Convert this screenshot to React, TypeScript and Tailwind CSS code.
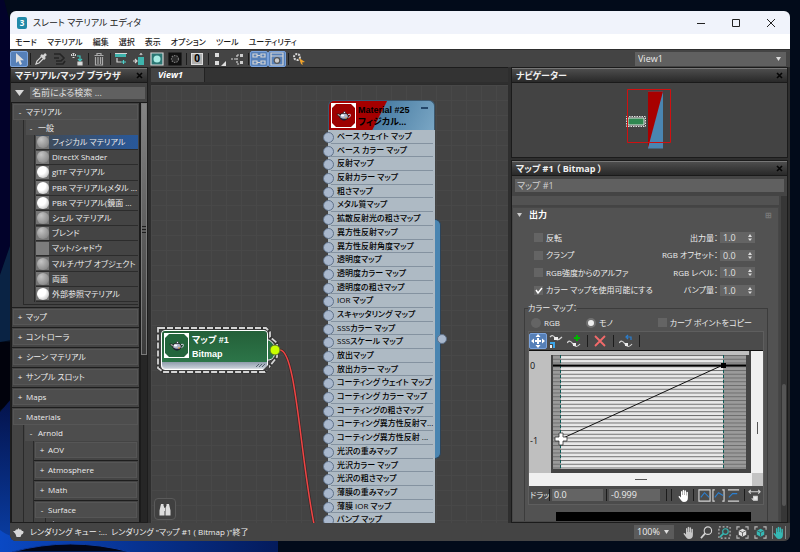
import type { ReactNode } from "react";
import clsx from "clsx";

const materials = [
  { name: "フィジカル マテリアル", tone: "gray" },
  { name: "DirectX Shader", tone: "gray" },
  { name: "glTF マテリアル", tone: "white" },
  { name: "PBR マテリアル(メタル ...", tone: "white" },
  { name: "PBR マテリアル(鏡面 ...", tone: "white" },
  { name: "シェル マテリアル", tone: "gray" },
  { name: "ブレンド", tone: "gray" },
  { name: "マット/シャドウ", tone: "flat" },
  { name: "マルチ/サブ オブジェクト", tone: "gray" },
  { name: "両面", tone: "gray" },
  { name: "外部参照マテリアル", tone: "white" },
];

const slots = [
  "ベース ウェイト マップ",
  "ベース カラー マップ",
  "反射マップ",
  "反射カラー マップ",
  "粗さマップ",
  "メタル質マップ",
  "拡散反射光の粗さマップ",
  "異方性反射マップ",
  "異方性反射角度マップ",
  "透明度マップ",
  "透明度カラー マップ",
  "透明度の粗さマップ",
  "IOR マップ",
  "スキャッタリング マップ",
  "SSSカラー マップ",
  "SSSスケール マップ",
  "放出マップ",
  "放出カラー マップ",
  "コーティング ウェイト マップ",
  "コーティング カラー マップ",
  "コーティングの粗さマップ",
  "コーティング異方性反射マ...",
  "コーティング異方性反射 ...",
  "光沢の重みマップ",
  "光沢カラー マップ",
  "光沢の粗さマップ",
  "薄膜の重みマップ",
  "薄膜 IOR マップ",
  "バンプ マップ",
];

const menus = ["モード", "マテリアル", "編集", "選択", "表示", "オプション", "ツール", "ユーティリティ"];

const outputRows = [
  { id: "invert", check: "反転", on: false, value: "出力量：", amount: "1.0" },
  { id: "clamp", check: "クランプ", on: false, value: "RGB オフセット：", amount: "0.0" },
  { id: "alpha", check: "RGB強度からのアルファ", on: false, value: "RGB レベル：", amount: "1.0" },
  { id: "curve", check: "カラー マップを使用可能にする", on: true, value: "バンプ量：", amount: "1.0" },
];

function Svg({ children, size = 14 }: { children: ReactNode; size?: number }) {
  return (
    <svg width={size} height={size} viewBox="0 0 14 14" fill="none" stroke="#d4d4d4" strokeWidth="1.2" aria-hidden>
      {children}
    </svg>
  );
}

function Tool({ label, active = false, children }: { label: string; active?: boolean; children: ReactNode }) {
  return (
    <button
      aria-label={label}
      className={clsx("flex h-4 w-[18px] shrink-0 items-center justify-center", active && "rounded-xs border border-[#7ba3dc] bg-[#5680b8]")}
    >
      {children}
    </button>
  );
}

function Sep() {
  return <span className="flex h-3 w-1 shrink-0 justify-center"><span className="w-px bg-[#1c1c1c]" /></span>;
}

function Teapot({ size = 16 }: { size?: number }) {
  return (
    <svg width={size} height={size} viewBox="0 0 16 16" aria-hidden>
      <path d="M4.500 9.500L.8 6.300l1.400-.3L5.500 7z" fill="#fff" stroke="#111" strokeWidth=".7" />
      <path d="M12 6.500q3-1 2.500 1q-.5 2-3 2.500" fill="none" stroke="#ccd" strokeWidth="1" />
      <ellipse cx="8" cy="8.500" rx="4.200" ry="3.300" fill="#aeb4c8" stroke="#111" strokeWidth=".8" />
      <path d="M4.500 9.500q3.500 2.500 7 0q-1 3-3.500 3q-2.500 0-3.500-3" fill="#1d2038" />
      <ellipse cx="6.500" cy="7.500" rx="1.800" ry="1" fill="#fff" />
      <circle cx="8.500" cy="4.500" r="1" fill="#e8e8ff" stroke="#111" strokeWidth=".5" />
      <path d="M9 10h2" stroke="#e79b2e" />
    </svg>
  );
}

function Thumb({ className }: { className: string }) {
  return (
    <div className={clsx("relative flex h-[25px] w-[25px] shrink-0 items-center justify-center border border-white", className)}>
      <svg className="absolute inset-0" width="23" height="23" aria-hidden>
        <path d="M0 0h4L0 4zM23 0v4L19 0zM0 23v-4L4 23zM23 23h-4L23 19z" fill="#fff" />
      </svg>
      <Teapot />
    </div>
  );
}

function PanelHeader({ title }: { title: string }) {
  return (
    <div className="flex h-[15px] shrink-0 items-center justify-between border-t border-b border-t-[#777] border-b-[#1a1a1a] bg-linear-to-b from-[#4d4d4d] to-[#292929] pr-1 pl-1">
      <h2 className="text-[9px] leading-3 font-bold whitespace-nowrap text-[#f0f0f0]">{title}</h2>
      <button aria-label={`${title} を閉じる`} className="flex">
        <svg width="7" height="7" viewBox="0 0 7 7" stroke="#050505" strokeWidth="1.600" aria-hidden>
          <path d="M1 1l5 5M6 1L1 6" />
        </svg>
      </button>
    </div>
  );
}

function Group({ label, open = false, children }: { label: string; open?: boolean; children?: ReactNode }) {
  return (
    <div className="border-b border-[#1e1e1e] p-px pb-0.5">
      <button className="flex h-4 w-full items-center gap-[3px] border border-[#565656] bg-[#4d4d4d] px-[3px] text-left whitespace-nowrap">
        <span className="w-1.5 text-center">{open ? "-" : "+"}</span>
        {label}
      </button>
      {children}
    </div>
  );
}

function Swatch({ tone }: { tone: string }) {
  if (tone === "flat") return <span className="h-[13px] w-[13px] shrink-0 bg-[#7d7d7d]" />;
  return (
    <span className="flex h-[13px] w-[13px] shrink-0 items-center justify-center bg-[#757575]">
      <span
        className={clsx(
          "h-3 w-3 rounded-full bg-radial-[at_35%_30%]",
          tone === "white" ? "from-white from-40% to-[#a5a5a5]" : "from-[#c4c4c4] to-[#777]",
        )}
      />
    </span>
  );
}

function Browser() {
  return (
    <section className="flex min-h-0 flex-col border border-[#1d1d1d] bg-[#444]">
      <PanelHeader title="マテリアル/マップ ブラウザ" />
      <div className="flex h-[19px] shrink-0 items-center gap-1.5 pr-0.5 pl-1">
        <button aria-label="検索オプション" className="flex">
          <svg width="9" height="6" aria-hidden><path d="M0 0h9L4.500 6z" fill="#d8d8d8" /></svg>
        </button>
        <input aria-label="検索" defaultValue="名前による検索 ..." className="h-3 min-w-0 flex-1 bg-[#606060] px-0.5 text-[9px] leading-3 text-[#dedede]" />
      </div>
      <div className="flex min-h-0 flex-1 border-t border-[#1b1b1b]">
        <div className="min-w-0 flex-1 overflow-hidden border-l border-[#1b1b1b] text-[8px] leading-3">
          <Group label="マテリアル" open>
            <div className="ml-2.5 border-b border-l border-[#2a2a2a] pb-0.5 pl-0.5">
              <button className="flex h-[15px] w-full items-center gap-1 bg-[#4d4d4d] px-0.5 text-left">
                <span className="w-1.5 text-center">-</span>一般
              </button>
              <ul className="ml-2 grid h-[167px] grid-rows-11 border-l border-[#2a2a2a] pl-px">
                {materials.map((item, i) => (
                  <li
                    key={item.name}
                    className={clsx(
                      "flex min-w-0 items-center gap-[3px] border-b border-[#2c2c2c] whitespace-nowrap",
                      i === 0 ? "bg-linear-to-r from-[#404953] to-[#28589a]" : "bg-[#444]",
                    )}
                  >
                    <Swatch tone={item.tone} />
                    <span>{item.name}</span>
                  </li>
                ))}
              </ul>
            </div>
          </Group>
          {["マップ", "コントローラ", "シーン マテリアル", "サンプル スロット", "Maps"].map((name) => (
            <Group key={name} label={name} />
          ))}
          <Group label="Materials" open>
            <div className="ml-2.5 border-l border-[#2a2a2a] pl-px">
              <button className="flex h-4 w-full items-center gap-1 bg-[#4d4d4d] px-[3px] text-left">
                <span className="w-1.5 text-center">-</span>Arnold
              </button>
              <div className="ml-2 border-l border-[#2a2a2a]">
                <Group label="AOV" />
                <Group label="Atmosphere" />
                <Group label="Math" />
                <Group label="Surface" open>
                  <div className="ml-2.5 h-4 border-l border-[#2a2a2a]"><Teapot size={14} /></div>
                </Group>
              </div>
            </div>
          </Group>
        </div>
        <div className="flex w-2 shrink-0 flex-col border-l-2 border-[#1b1b1b] bg-[#262626]">
          <div className="flex h-[252px] flex-col items-center justify-center gap-0.5 border border-[#7a7a7a] bg-linear-to-b from-[#858585] to-[#3a3a3a]">
            <span className="h-px w-1 bg-[#1e1e1e]" />
            <span className="h-px w-1 bg-[#1e1e1e]" />
            <span className="h-px w-1 bg-[#1e1e1e]" />
          </div>
        </div>
      </div>
    </section>
  );
}

function MaterialNode() {
  return (
    <div className="absolute top-[15px] left-[177px] w-[107px] text-black">
      <div className="absolute top-[119px] left-full h-[240px] w-1.5 rounded-r-md border border-l-0 border-[#2c4358] bg-[#4a85b1]" />
      <div className="absolute top-[234px] left-[109px] h-2.5 w-2.5 rounded-full border border-[#5f7189] bg-[#a9b8cd]" />
      <div className="flex h-[30px] items-start gap-0.5 overflow-hidden rounded-t-md border border-b-0 border-[#3c5970] bg-[linear-gradient(117deg,#a50000_48%,#4b7fa5_49%,#7aa6c4)] p-0.5">
        <Thumb className="bg-[#9d0000]" />
        <div className="min-w-0 flex-1 pt-px font-['Liberation_Sans','Noto_Sans_CJK_JP',sans-serif] text-[9px] leading-3 font-bold whitespace-nowrap">
          <p>Material #25</p>
          <p>フィジカル...</p>
        </div>
        <button aria-label="折りたたむ" className="absolute top-[7px] right-[7px] h-0.5 w-[7px] bg-[#24476a]" />
      </div>
      <ul className="grid h-[397px] grid-rows-29 bg-[#aebac4]">
        {slots.map((slot) => (
          <li key={slot} className="relative flex items-center pr-1 pl-[3px]">
            <span className="absolute top-0.5 -left-[5px] h-[11px] w-[11px] rounded-full border border-[#5f7189] bg-[#a9b8cd]" />
            <span className="h-full flex-1 border-b border-[#8492a0] pl-1.5 text-[8px] leading-3 font-medium whitespace-nowrap">{slot}</span>
          </li>
        ))}
      </ul>
    </div>
  );
}

function BitmapNode() {
  return (
    <>
      <svg className="absolute top-[240px] left-0" width="180" height="200" fill="none" aria-hidden>
        <path d="M8 3H115L119 7V12L126 18V32L114 47H12L7 43V3Z" stroke="#333" strokeWidth="3" />
        <path d="M8 3H115L119 7V12L126 18V32L114 47H12L7 43V3Z" stroke="#d4d4d4" strokeWidth="1.800" strokeDasharray="6 2" />
        <path d="M116 15h2q6 3 6 11t-6 9h-2z" fill="#2a7345" stroke="#e8e8e8" />
        <path d="M129 25C145 25 149 130 163 199" stroke="#3a2a2a" strokeWidth="3" />
        <path d="M129 25C145 25 149 130 163 199" stroke="#f04444" strokeWidth="1.500" />
        <circle cx="124" cy="25" r="5" fill="#c8ff00" stroke="#56702a" />
      </svg>
      <div className="absolute top-[245px] left-2.5 h-10 w-[107px] overflow-hidden rounded-sm border border-white bg-[#d5dae0]">
        <div className="flex h-[31px] gap-[3px] bg-linear-to-b from-[#246039] to-[#2c7548] p-0.5">
          <Thumb className="bg-[#23653c]" />
          <div className="font-['Liberation_Sans','Noto_Sans_CJK_JP',sans-serif] text-[9px] leading-[14px] font-bold text-white">
            <p>マップ #1</p>
            <p>Bitmap</p>
          </div>
        </div>
        <div className="h-1.5 rounded-b-sm bg-linear-to-b from-[#8f9cab] to-[#c4ccd5]" />
      </div>
      <svg className="absolute top-[277px] left-[103px]" width="16" height="9" stroke="#56616d" aria-hidden>
        <path d="M2 5l3-3M5 5l3-3M8 5l3-3" />
        <path d="M9 8L15 2V9z" fill="#434343" stroke="none" />
      </svg>
    </>
  );
}

function GraphView() {
  return (
    <section className="flex min-h-0 min-w-0 flex-col">
      <div className="h-[15px] shrink-0 border-t border-[#1c1c1c] bg-[#333]">
        <button className="flex h-full w-[54px] items-center border-r border-[#222] bg-[#444] pl-[7px] text-[9px] font-bold text-white italic">View1</button>
      </div>
      <div className="relative mt-0.5 min-h-0 flex-1 overflow-hidden border-t border-[#2c2c2c] bg-[#434343] bg-[linear-gradient(#484848_1px,transparent_1px),linear-gradient(90deg,#484848_1px,transparent_1px)] bg-size-[15px_15px]">
        <BitmapNode />
        <MaterialNode />
        <button aria-label="検索" className="absolute bottom-[3px] left-[3px] flex h-[22px] w-[22px] items-center justify-center rounded-sm border border-[#5a5a5a] bg-[#404040]">
          <svg width="12" height="13" viewBox="0 0 12 13" fill="#dcdcdc" aria-hidden>
            <path d="M2 1h2.500v1.500L5.500 5v7.500H.5V7.500zM10 1H7.500v1.500L6.500 5v7.500h5V7.500zM5 5h2v3H5z" />
          </svg>
        </button>
      </div>
    </section>
  );
}

function Navigator() {
  return (
    <section className="flex h-[91px] shrink-0 flex-col border border-[#1b1b1b] bg-[#434343]">
      <PanelHeader title="ナビゲーター" />
      <div className="flex flex-1 items-center justify-center pr-px">
        <svg width="46" height="62" aria-hidden>
          <path d="M22 2.500h15v57H22z" fill="#4a85b1" />
          <path d="M22 2.500h15L22 59z" fill="#a80000" />
          <path d="M.5 27.500h19v10H.5z" fill="none" stroke="#ddd" strokeDasharray="1.500 1" />
          <path d="M2 29h16v7H2z" fill="#2f8750" stroke="#e4e4e4" />
          <path d="M1.500.5h43v53h-43z" fill="none" stroke="#d01010" />
        </svg>
      </div>
    </section>
  );
}

function CurveGraph() {
  return (
    <div className="flex border-t border-[#111]">
      <svg width="222" height="122" className="bg-[#444]" aria-label="カラー マップ カーブ" role="img">
        <defs>
          <pattern id="rows" width="4" height="3.750" y="4" patternUnits="userSpaceOnUse">
            <path d="M0 .5h4" stroke="#6d6d6d" />
          </pattern>
        </defs>
        <path d="M0 0h22v122H0zM22 0h198v4H22z" fill="#bfbfbf" />
        <path d="M24 4h193v114H24z" fill="#9b9b9b" />
        <path d="M32 4h162v114H32z" fill="#e9e9e9" />
        <path d="M24 4h193v114H24z" fill="url(#rows)" />
        <path d="M31.500 4v114M194.500 4v114" stroke="#0c5a56" strokeDasharray="3 2" />
        <path d="M24 14.500h193" stroke="#000" strokeWidth="2" />
        <path d="M32 88L194 14" stroke="#111" />
        <path d="M192 12h5v5h-5z" />
        <path d="M30 82h4v4h4v4h-4v4h-4v-4h-4v-4h4z" fill="#fff" stroke="#333" strokeWidth=".8" />
        <text x="1" y="18" fontSize="9" fill="#111">0</text>
        <text x="1" y="93" fontSize="9" fill="#111">-1</text>
      </svg>
      <div className="flex flex-1 items-center justify-center bg-[#f0f0f0] pt-8">
        <span className="h-3 w-px bg-[#555]" />
      </div>
    </div>
  );
}

function OutputRollout() {
  return (
    <div className="mt-0.5 min-h-0 flex-1 overflow-hidden border border-[#474747] bg-[#525252] pt-px pl-1">
      <button className="flex h-3 w-full items-center gap-1.5 text-[9px] font-bold text-white">
        <svg width="6" height="4" aria-hidden><path d="M0 0h5L2.500 4z" fill="#ccc" /></svg>
        出力
        <span className="mr-1.5 ml-auto text-[8px] text-[#777]">⊞</span>
      </button>
      <div className="mt-2 grid h-[70px] grid-rows-4 pr-[23px] pl-[17px] text-[8px]">
        {outputRows.map((row) => (
          <div key={row.id} className="flex items-center whitespace-nowrap">
            <label className="flex items-center gap-[3px]">
              <input
                type="checkbox"
                defaultChecked={row.on}
                className="h-[9px] w-[9px] appearance-none bg-[#646464] checked:bg-[url('data:image/svg+xml,%3Csvg%20xmlns=%22http://www.w3.org/2000/svg%22%20viewBox=%220%200%209%209%22%3E%3Cpath%20d=%22M2%204l2%203%204-5%22%20fill=%22none%22%20stroke=%22white%22%20stroke-width=%221.500%22/%3E%3C/svg%3E')]"
              />
              {row.check}
            </label>
            <label htmlFor={row.id} className="ml-auto">{row.value}</label>
            <span className="ml-0.5 flex h-[11px] w-[35px] items-center bg-[#646464] pr-[3px]">
              <input id={row.id} defaultValue={row.amount} className="h-[11px] w-full min-w-0 pl-[3px] text-[9px] text-[#e0e0e0]" />
              <svg width="4" height="7" fill="#ddd" className="shrink-0" aria-hidden><path d="M0 3h4L2 0zM0 4.500h4L2 7z" /></svg>
            </span>
          </div>
        ))}
      </div>
      <fieldset className="mt-[3px] mr-2.5 ml-[7px] h-[230px] border border-[#3c3c3c] px-[3px]">
        <legend className="text-[8px] leading-3">カラー マップ：</legend>
        <div className="flex h-[17px] items-center gap-[26px] pr-3 pl-[3px] text-[8px] whitespace-nowrap">
          <label className="flex items-center gap-[3px]">
            <input type="radio" name="curve" className="h-2.5 w-2.5 appearance-none rounded-full bg-[#646464]" />
            RGB
          </label>
          <label className="flex items-center gap-[3px]">
            <input type="radio" name="curve" defaultChecked className="h-2.5 w-2.5 appearance-none rounded-full border-2 border-[#707070] bg-[#eee]" />
            モノ
          </label>
          <label className="ml-auto flex items-center gap-[3px]">
            <input type="checkbox" className="h-[9px] w-[9px] appearance-none bg-[#646464]" />
            カーブ ポイントをコピー
          </label>
        </div>
        <div className="border border-[#5e5e5e]">
          <div className="flex h-[18px] items-center bg-[#4b4b4b]">
            <Tool label="移動" active>
              <svg width="14" height="14" viewBox="0 0 14 14" fill="#fff" aria-hidden>
                <path d="M7 0l2.500 3h-5zM7 14l2.500-3h-5zM0 7l3-2.500v5zM14 7l-3-2.500v5zM6 4h2v2h2v2H8v2H6V8H4V6h2z" />
              </svg>
            </Tool>
            <Tool label="スケール">
              <Svg><path d="M1 3q3-3 5 1t7-1" /><path d="M5 3h4v3H5z" fill="#eee" stroke="none" /><path d="M1 8h5v6H4v-4H1z" fill="#3aa4e8" stroke="none" /><path d="M1 11h2v3H1z" fill="#eee" stroke="none" /></Svg>
            </Tool>
            <Tool label="ポイントを追加">
              <Svg><path d="M0 9q3-4 6 1t7 0" /><path d="M6 9h3v3H6z" fill="#eee" stroke="none" /><path d="M10 1v6M7 4h6" stroke="#00b400" strokeWidth="2" /></Svg>
            </Tool>
            <span className="w-0.5" /><Sep /><span className="w-0.5" />
            <Tool label="削除"><Svg><path d="M2 2l10 10M12 2L2 12" stroke="#f26a6a" strokeWidth="1.800" /></Svg></Tool>
            <span className="w-0.5" /><Sep /><span className="w-0.5" />
            <Tool label="リセット">
              <Svg><path d="M0 9q3-4 6 1t7 0" /><path d="M6 9h3v3H6z" fill="#eee" stroke="none" /><path d="M8 3h4v3M9 1L7 3l2 2" stroke="#2b7fd0" /></Svg>
            </Tool>
            <span className="w-0.5" /><Sep />
          </div>
          <CurveGraph />
          <div className="flex h-[13px]">
            <div className="flex flex-1 items-center justify-center bg-[#f0f0f0]"><span className="h-px w-3 bg-[#555]" /></div>
            <div className="w-[11px] bg-[#c4c4c4]" />
          </div>
          <div className="flex h-[18px] items-center gap-px bg-[#4b4b4b] pl-px text-[9px]">
            <span className="w-4 text-[8px] whitespace-nowrap">ドラッ</span>
            <Sep />
            <input aria-label="X" defaultValue="0.0" className="h-3 w-[51px] bg-[#646464] pl-0.5" />
            <Sep />
            <input aria-label="Y" defaultValue="-0.999" className="h-3 w-[51px] bg-[#646464] pl-0.5" />
            <span className="w-0.5" /><Sep /><Sep />
            <div className="flex flex-1 items-center justify-between pr-0.5 pl-1">
              <button aria-label="パン" className="flex"><Hand color="#fff" /></button>
              <Sep />
              <button aria-label="全体表示" className="flex"><Svg size={13}><path d="M1 1h12v12H1z" /><path d="M3 9l4-5 5 5" stroke="#2b7fd0" /></Svg></button>
              <button aria-label="水平方向" className="flex"><Svg size={13}><path d="M3 1H1v12h2M11 1h2v12h-2" /><path d="M3 9l4-5 5 3" stroke="#2b7fd0" /></Svg></button>
              <button aria-label="垂直方向" className="flex"><Svg size={13}><path d="M1 1h12M1 13h12" /><path d="M2 9l4-4h5" stroke="#2b7fd0" /></Svg></button>
              <Sep />
              <button aria-label="水平ズーム" className="flex"><Svg size={13}><path d="M1 3h12M3 1L1 3l2 2M11 1l2 2-2 2" /><path d="M6 8h4v4H6zM4 10l2 2" fill="#eee" /></Svg></button>
            </div>
          </div>
        </div>
        <div className="mt-[7px] mr-[13px] ml-7 h-4 bg-black" />
      </fieldset>
    </div>
  );
}

function Parameters() {
  return (
    <section className="mt-0.5 flex min-h-0 flex-1 flex-col border border-[#1b1b1b] bg-[#444]">
      <PanelHeader title="マップ #1 （ Bitmap ）" />
      <input aria-label="マップ名" defaultValue="マップ #1" className="mx-[3px] mt-[3px] h-[13px] shrink-0 bg-[#606060] pl-0.5 text-[9px] text-[#d0d0d0]" />
      <div className="mt-1 flex min-h-0 flex-1 gap-0.5">
        <div className="flex min-w-0 flex-1 flex-col">
          <div className="h-[9px] shrink-0 bg-[#525252]" />
          <OutputRollout />
        </div>
        <div className="flex w-1.5 flex-col justify-end bg-[#363636] pb-4"><span className="ml-px h-[122px] w-1 rounded-sm bg-[#555]" /></div>
      </div>
    </section>
  );
}

function Hand({ color }: { color: string }) {
  return (
    <svg width="12" height="13" viewBox="0 0 12 13" fill={color} aria-hidden>
      <path d="M3 7V2.500q.7-1 1.300 0V6h.4V1.200q.8-1 1.500 0V6h.4V1.700q.8-1 1.500 0V6.500h.4V3.200q.7-.9 1.400 0V9q0 4-4 4Q4 13 2.500 10.500L.6 8q-.2-1.200 1-.9L3 8.500z" />
    </svg>
  );
}

function CubeView({ color }: { color: string }) {
  return (
    <Svg size={13}>
      <path d="M1 4V1h3M10 1h3v3M13 10v3h-3M4 13H1v-3" stroke="#bbb" />
      <path d="M7 3l4 2v4.500L7 11.500 3 9.500V5z" fill={color} stroke="none" />
      <path d="M3.500 5.300L7 7l3.500-1.700M7 7v4" stroke="#444" strokeWidth=".8" />
    </Svg>
  );
}

function StatusBar() {
  return (
    <footer className="flex h-[18px] shrink-0 items-center bg-[#444] pr-1 pl-[3px] text-[8px] text-[#eee]">
      <svg width="11" height="9" viewBox="0 0 11 9" fill="#d8d8d8" aria-hidden>
        <path d="M5.500 0l1 1.500h1.500L9 3q2-.5 1.500 1.500T8.500 6.500L7.500 9h-4L2.500 6 0 3h2l1-1.500h1.500z" />
      </svg>
      <p className="ml-1.5 whitespace-pre">レンダリング キュー :...  レンダリング &quot;マップ #1 ( Bitmap )&quot;終了</p>
      <div className="ml-auto flex items-center gap-[5px]">
        <span className="relative mr-1 flex h-3.5 w-10 items-center bg-[#5b5b5b]">
          <select aria-label="ズーム" className="w-full appearance-none pl-[3px] text-[9px]"><option>100%</option></select>
          <svg className="pointer-events-none absolute right-[5px]" width="5" height="4" aria-hidden><path d="M0 0h5L2.500 4z" fill="#ddd" /></svg>
        </span>
        <button aria-label="パン" className="flex"><Hand color="#c8c8c8" /></button>
        <button aria-label="ズーム" className="flex"><Svg size={13}><circle cx="8.500" cy="5" r="4" /><path d="M5.500 8L1 13" strokeWidth="1.800" /></Svg></button>
        <button aria-label="領域ズーム" className="flex">
          <Svg size={13}><path d="M1 1h12v12H1z" stroke="#bbb" strokeDasharray="2 2" /><circle cx="8" cy="6" r="3" stroke="#35b8b4" /><path d="M6 8l-4 4" stroke="#35b8b4" strokeWidth="1.800" /></Svg>
        </button>
        <button aria-label="全体ズーム" className="flex"><CubeView color="#e0e0e0" /></button>
        <button aria-label="選択ズーム" className="flex"><CubeView color="#35b8b4" /></button>
        <button aria-label="選択パン" className="flex border-x border-[#888]"><Hand color="#35b8b4" /></button>
      </div>
    </footer>
  );
}

function Toolbar() {
  return (
    <div className="flex h-[18px] shrink-0 items-center border-t border-[#2e2e2e] bg-[#444] pr-1">
      <Tool label="選択" active><Svg><path d="M4 1v10l2.300-2 1.700 4 2-1-1.700-3.700H12z" fill="#ddd" stroke="none" /></Svg></Tool>
      <Sep />
      <Tool label="スポイト"><Svg><path d="M2 12l1-3 5-5 2 2-5 5z" /><path d="M7 3l4 4M9 5l3-3" strokeWidth="2.500" /></Svg></Tool>
      <Tool label="シーンに配置"><Svg><path d="M2 2h6l4 4-3 3H4M4 12h7l2-3M2 6h5" stroke="#242424" strokeWidth="1.600" /></Svg></Tool>
      <Tool label="割り当て"><Svg><path d="M1 3h5M3.500 1v5" strokeDasharray="1 1" strokeWidth="2" /><path d="M7 4h3v4M8 7l2 2 2-2" stroke="#3fc4bd" /><path d="M8 10h4v3H8z" fill="#ddd" /></Svg></Tool>
      <Sep />
      <Tool label="削除"><Svg><path d="M2.500 3.500h9M5 3V1.500h4V3M3.500 5v8h7V5M6 5v7M8.500 5v7" stroke="#aaa" /></Svg></Tool>
      <Sep />
      <Tool label="子を移動"><Svg><path d="M1 2h11v3H1z" fill="#3fb4ad" stroke="none" /><path d="M1 1.500h12" /><path d="M3 6v4h4" /><path d="M7 10h5M9.500 8v4" stroke="#4fd0ca" /></Svg></Tool>
      <Tool label="未使用を隠す"><Svg><path d="M6 5h6v8H6z" fill="#3fb4ad" stroke="none" /><path d="M8 3q1-3 2 0M1 9h4M3 7l2 2-2 2" /></Svg></Tool>
      <Tool label="ビューポート"><Svg><path d="M1 1h12v12H1z" fill="#2b7774" /><circle cx="7" cy="7" r="3.500" fill="#a8ece4" stroke="none" /></Svg></Tool>
      <Tool label="背景"><Svg><path d="M1 1h12v12H1z" fill="#111" stroke="#111" /><circle cx="7" cy="7" r="3.500" fill="#2c2c2c" stroke="#777" strokeDasharray="1.500 1" /></Svg></Tool>
      <Sep />
      <Tool label="ID チャネル"><span className="flex h-3 w-3 items-center justify-center border border-[#ddd] bg-[#b0b0b0] text-[10px] font-bold text-black">0</span></Tool>
      <Sep />
      <Tool label="レイアウト"><Svg><path d="M3 1h4v4H3zM3 9h4v4H3z" fill="#ddd" stroke="none" /><path d="M14 9v5H9z" fill="#ddd" stroke="none" /></Svg></Tool>
      <Tool label="子をレイアウト"><Svg><path d="M1 7h6M7 3v9M7 3h3M7 12h3" strokeDasharray="2 1" /><path d="M10 2h3v3h-3zM10 9h3v3h-3z" fill="#ccc" stroke="none" /></Svg></Tool>
      <Sep />
      <Tool label="ブラウザ" active><Svg><path d="M1 2h4v3H1zM1 9h4v3H1zM5 3.500h3M5 10.500h3M9 2h4v3H9zM9 9h4v3H9z" /></Svg></Tool>
      <Tool label="パラメータ" active><Svg><path d="M1 1h12v12H1zM1 4h12" /><circle cx="7" cy="8.500" r="2.800" fill="#ccc" stroke="#555" /></Svg></Tool>
      <Sep />
      <Tool label="マテリアルで選択"><Svg><circle cx="5" cy="5" r="3" strokeDasharray="2 1" strokeWidth="2" /><path d="M7 6l6 4-3 .5L11 13l-2-1z" fill="#f0a32c" stroke="none" /></Svg></Tool>
      <span className="relative mt-px ml-auto flex h-3.5 w-[151px] items-center bg-[#606060]">
        <select aria-label="ビュー" className="w-full appearance-none pl-[3px] text-[9px]"><option>View1</option></select>
        <svg className="pointer-events-none absolute right-[5px]" width="5" height="4" aria-hidden><path d="M0 0h5L2.500 4z" fill="#ddd" /></svg>
      </span>
    </div>
  );
}

function Desktop() {
  return (
    <svg className="absolute inset-0 h-full w-full" viewBox="0 0 800 552" preserveAspectRatio="none" aria-hidden>
      <defs>
        <linearGradient id="bloom" x1="0" y1="0" x2="1" y2="0">
          <stop offset="0" stopColor="#0a49c4" />
          <stop offset="1" stopColor="#041b5c" />
        </linearGradient>
        <linearGradient id="petal" x1="0" y1="0" x2="0" y2="1">
          <stop offset="0" stopColor="#04124a" />
          <stop offset="1" stopColor="#0a40a8" />
        </linearGradient>
      </defs>
      <path d="M0 0h800v552H0z" fill="#020b1a" />
      <path d="M0 0h4l8 30v210L0 275z" fill="#02022a" />
      <path d="M0 275L12 240V340L0 342z" fill="#0a2344" />
      <path d="M0 342h12v60L0 410z" fill="#01020c" />
      <path d="M0 412L12 398V552H0z" fill="url(#petal)" />
      <path d="M0 530Q12 540 40 541H278V552H0z" fill="url(#bloom)" />
      <path d="M12 552Q70 536 130 552z" fill="#020617" stroke="#0d3aa0" />
    </svg>
  );
}

export default function App() {
  return (
    <div className="relative h-screen overflow-hidden px-2.5 py-[11px] font-['Open_Sans','Noto_Sans_CJK_JP',sans-serif] [font-feature-settings:'palt']">
      <Desktop />
      <main className="relative flex h-full flex-col overflow-hidden rounded-md bg-[#2e2e2e] text-[#ececec]">
        <header className="flex h-[23px] shrink-0 items-center bg-[#f0f3fb] pl-[7px] text-[#1a1a1a]">
          <span className="flex h-3 w-2.5 items-center justify-center rounded-xs bg-[#2189a8] text-[8px] font-bold text-white">3</span>
          <h1 className="ml-1.5 text-[9px] whitespace-nowrap">スレート マテリアル エディタ</h1>
          <div className="ml-auto flex pr-0.5">
            {[
              ["最小化", "M1 5.500h8"],
              ["最大化", "M1.500 1.500h7v7h-7z"],
              ["閉じる", "M1 1l8 8M9 1L1 9"],
            ].map(([label, d]) => (
              <button key={label} aria-label={label} className="flex w-[35px] justify-center">
                <svg width="10" height="10" fill="none" stroke="#222" aria-hidden><path d={d} /></svg>
              </button>
            ))}
          </div>
        </header>
        <nav className="flex h-[15px] shrink-0 items-center gap-[10px] bg-white pl-[5px] text-[8px] font-medium whitespace-nowrap text-[#1a1a1a]">
          {menus.map((name) => (
            <button key={name}>{name}</button>
          ))}
        </nav>
        <Toolbar />
        <div className="grid min-h-0 flex-1 grid-cols-[138px_minmax(0,1fr)_279px] grid-rows-[minmax(0,1fr)] gap-[3px]">
          <Browser />
          <GraphView />
          <div className="flex min-h-0 flex-col pr-0.5">
            <Navigator />
            <Parameters />
          </div>
        </div>
        <StatusBar />
      </main>
    </div>
  );
}
